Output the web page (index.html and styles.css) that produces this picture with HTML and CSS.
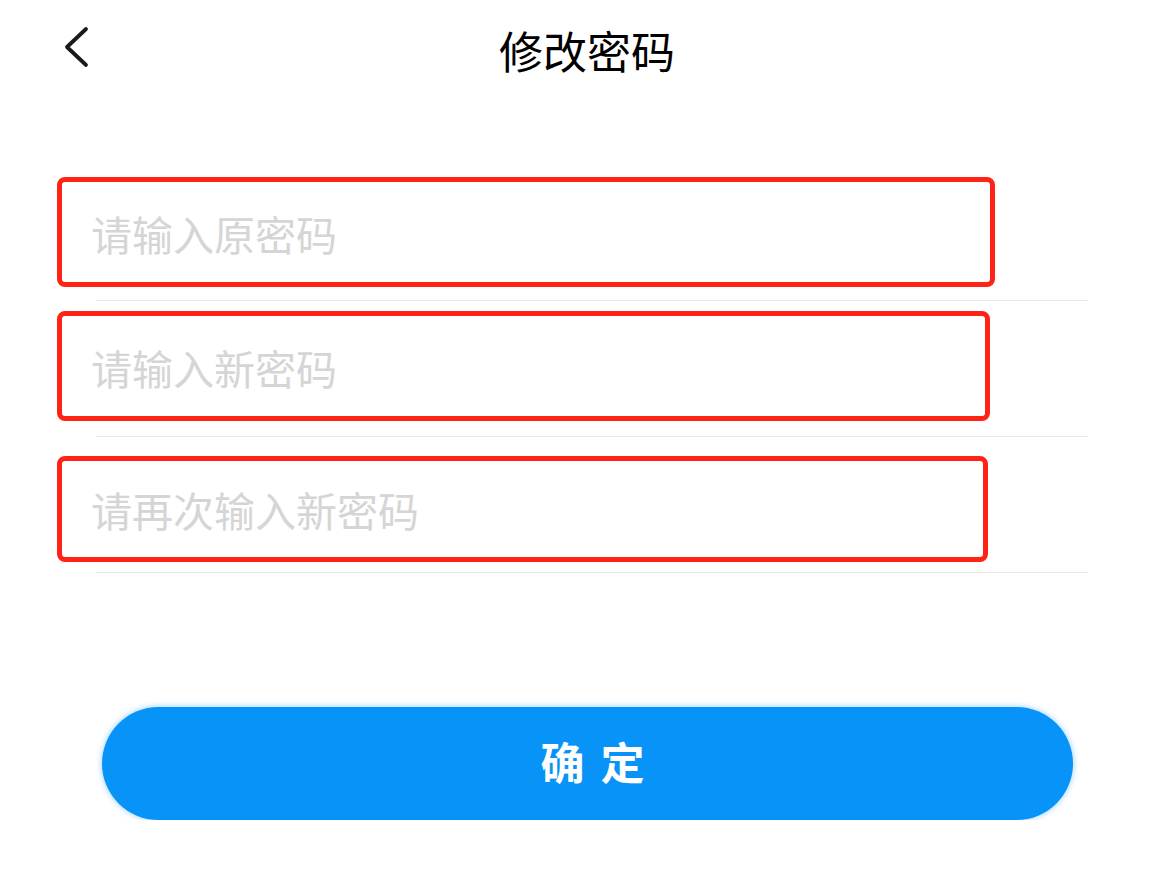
FILE: index.html
```html
<!DOCTYPE html>
<html lang="zh-CN">
<head>
  <meta charset="UTF-8" />
  <meta name="viewport" content="width=device-width, initial-scale=1.0"/>
  <title>修改密码</title>
  <link rel="stylesheet" href="styles.css">
</head>
<body>

  <header class="topbar">
    <a class="back" href="#" aria-label="返回">
      <svg width="28" height="42" viewBox="0 0 28 42">
        <polyline points="24,3 5,21 24,39" fill="none" stroke="#1a1a1a" stroke-width="3.8" stroke-linecap="round" stroke-linejoin="round"/>
      </svg>
    </a>
    <h1 class="title">修改密码</h1>
    <div></div>
  </header>

  <form class="pwd-form">
    <div class="field field-old">
      <input type="password" placeholder="请输入原密码">
    </div>
    <div class="divider divider-1"></div>

    <div class="field field-new">
      <input type="password" placeholder="请输入新密码">
    </div>
    <div class="divider divider-2"></div>

    <div class="field field-again">
      <input type="password" placeholder="请再次输入新密码">
    </div>
    <div class="divider divider-3"></div>

    <button type="button" class="submit-btn">确定</button>
  </form>

</body>
</html>
```

FILE: styles.css
```css
/* General */
body {
  margin: 0;
  background: #fff;
  font-family: "Noto Sans CJK SC", "Noto Sans", sans-serif;
  color: #111;
}

/* Top bar */
.topbar {
  height: 100px;
  display: grid;
  grid-template-columns: 1fr auto 1fr;
  align-items: center;
}

.back {
  display: flex;
  margin-left: 62px;
  margin-top: -6px;
}

.title {
  margin: 0;
  font-size: 44px;
  font-weight: 400;
  line-height: 1;
  color: #000;
}

/* Form */
.pwd-form {
  margin-top: 77px;
  padding-left: 57px;
}

.field {
  box-sizing: border-box;
  height: 110px;
  border: 5px solid #ff2317;
  border-radius: 8px;
  display: flex;
  align-items: center;
  padding: 2px 30px 0 29px;
}

.field-old { width: 938px; }
.field-new { width: 933px; margin-top: 10px; }
.field-again { width: 931px; height: 106px; margin-top: 19px; padding-bottom: 2px; }

.field input {
  width: 100%;
  border: none;
  outline: none;
  padding: 0;
  background: transparent;
  font-family: inherit;
  font-size: 41px;
  color: #333;
}

.field input::placeholder {
  color: #d5d5d5;
}

.divider {
  width: 992px;
  height: 1px;
  margin-left: 39px;
  background: #e9e9e9;
}

.divider-1 { margin-top: 13px; }
.divider-2 { margin-top: 15px; }
.divider-3 { margin-top: 10px; }

/* Button */
.submit-btn {
  display: block;
  width: 971px;
  height: 113px;
  margin: 134px 0 0 45px;
  border: none;
  border-radius: 57px;
  background: #0893f8;
  box-shadow: 0 0 6px rgba(8, 147, 248, 0.45);
  color: #fff;
  font-family: inherit;
  font-size: 44px;
  font-weight: 700;
  letter-spacing: 16px;
  padding: 0 0 6px 26px;
  cursor: pointer;
}
```
